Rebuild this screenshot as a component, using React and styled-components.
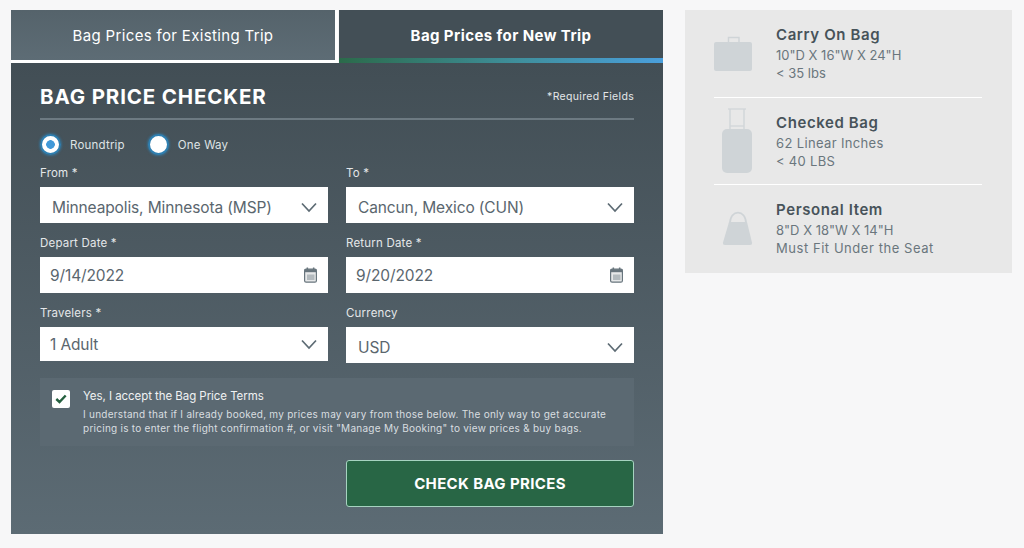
import React from 'react';
import styled, { createGlobalStyle } from 'styled-components';

const GlobalStyle = createGlobalStyle`
    * {
        box-sizing: border-box;
    }

    body {
        margin: 0;
        background: #f7f7f8;
        font-family: "Inter", "Noto Sans", sans-serif;
    }
`;

const Chevron = () => (
    <svg width="16" height="11" viewBox="0 0 16 11" fill="none">
        <path d="M1 1.5 L8 9 L15 1.5" stroke="#5d6b74" strokeWidth="1.7" />
    </svg>
);

const CalendarIcon = () => (
    <svg width="13" height="16" viewBox="0 0 13 16">
        <rect x="0.6" y="2.2" width="11.8" height="13" rx="1.5" fill="#e6e8e9" stroke="#68757d" strokeWidth="1.2" />
        <rect x="0.6" y="2.2" width="11.8" height="3" fill="#68757d" />
        <rect x="2.6" y="0.5" width="1.5" height="3" fill="#68757d" />
        <rect x="8.9" y="0.5" width="1.5" height="3" fill="#68757d" />
        <rect x="3" y="7.5" width="7.5" height="5.5" fill="#b3babe" />
    </svg>
);

const CarryOnIcon = () => (
    <svg width="40" height="36" viewBox="0 0 40 36">
        <path d="M14.5 7 V1.5 H25 V7" fill="none" stroke="#cfd4d7" strokeWidth="1.4" />
        <rect x="0" y="6" width="38" height="29" rx="2" fill="#cfd4d7" />
    </svg>
);

const CheckedIcon = () => (
    <svg width="40" height="66" viewBox="0 0 40 66">
        <path d="M14 1 H32 M16 1 V21 M30 1 V21 M16 18 H30" fill="none" stroke="#d3d7da" strokeWidth="1.6" />
        <rect x="8" y="21" width="30" height="44" rx="5" fill="#cfd4d7" />
    </svg>
);

const PersonalIcon = () => (
    <svg width="40" height="38" viewBox="0 0 40 38">
        <path d="M15.8 14 C16.2 6 20 2.6 24 2.6 C28 2.6 31.8 6 32.2 14" fill="none" stroke="#cfd4d7" strokeWidth="1.8" />
        <path d="M15 12 H33 L38 32.5 Q38.4 35 36 35 H11 Q8.6 35 9 32.5 Z" fill="#cfd4d7" />
    </svg>
);

const CheckIcon = () => (
    <svg width="12" height="10" viewBox="0 0 12 10" fill="none">
        <path d="M1.3 5 L4.5 8 L10.7 1.5" stroke="#24603f" strokeWidth="2.4" />
    </svg>
);

const bags = [
    {
        title: 'Carry On Bag',
        Icon: CarryOnIcon,
        lines: [{ text: '10"D X 16"W X 24"H', tracking: 0 }, { text: '< 35 lbs', tracking: 0 }],
    },
    {
        title: 'Checked Bag',
        Icon: CheckedIcon,
        lines: [{ text: '62 Linear Inches', tracking: 0.35 }, { text: '< 40 LBS', tracking: 0.3 }],
    },
    {
        title: 'Personal Item',
        Icon: PersonalIcon,
        lines: [{ text: '8"D X 18"W X 14"H', tracking: 0 }, { text: 'Must Fit Under the Seat', tracking: 0.55 }],
    },
];

const App = () => {
    return (
        <Page>
            <GlobalStyle />
            <Main>
                <Tabs>
                    <Tab>Bag Prices for Existing Trip</Tab>
                    <Tab $active>Bag Prices for New Trip</Tab>
                </Tabs>
                <Panel>
                    <Header>
                        <Title>BAG PRICE CHECKER</Title>
                        <Required>*Required Fields</Required>
                    </Header>
                    <RadioRow>
                        <RadioOption>
                            <Radio $checked />
                            Roundtrip
                        </RadioOption>
                        <RadioOption>
                            <Radio />
                            One Way
                        </RadioOption>
                    </RadioRow>
                    <FieldGrid>
                        <Field>
                            <Label>From *</Label>
                            <Control $select>
                                <span>Minneapolis, Minnesota (MSP)</span>
                                <Chevron />
                            </Control>
                        </Field>
                        <Field>
                            <Label>To *</Label>
                            <Control $select>
                                <span>Cancun, Mexico (CUN)</span>
                                <Chevron />
                            </Control>
                        </Field>
                        <Field>
                            <Label>Depart Date *</Label>
                            <Control>
                                <span>9/14/2022</span>
                                <CalendarIcon />
                            </Control>
                        </Field>
                        <Field>
                            <Label>Return Date *</Label>
                            <Control>
                                <span>9/20/2022</span>
                                <CalendarIcon />
                            </Control>
                        </Field>
                        <Field>
                            <Label>Travelers *</Label>
                            <Control $height={34}>
                                <span>1 Adult</span>
                                <Chevron />
                            </Control>
                        </Field>
                        <Field>
                            <Label>Currency</Label>
                            <Control $select>
                                <span>USD</span>
                                <Chevron />
                            </Control>
                        </Field>
                    </FieldGrid>
                    <Terms>
                        <Checkbox>
                            <CheckIcon />
                        </Checkbox>
                        <div>
                            <TermsTitle>Yes, I accept the Bag Price Terms</TermsTitle>
                            <TermsText>
                                I understand that if I already booked, my prices may vary from those below. The only way to get accurate
                                <br />
                                pricing is to enter the flight confirmation #, or visit "Manage My Booking" to view prices &amp; buy bags.
                            </TermsText>
                        </div>
                    </Terms>
                    <Actions>
                        <SubmitButton>CHECK BAG PRICES</SubmitButton>
                    </Actions>
                </Panel>
            </Main>
            <Aside>
                {bags.map(({ title, lines, Icon }) => (
                    <BagRow key={title}>
                        <BagIcon>
                            <Icon />
                        </BagIcon>
                        <div>
                            <BagTitle>{title}</BagTitle>
                            {lines.map((line) => (
                                <BagLine key={line.text} $tracking={line.tracking}>
                                    {line.text}
                                </BagLine>
                            ))}
                        </div>
                    </BagRow>
                ))}
            </Aside>
        </Page>
    );
};

const Page = styled.div`
    display: flex;
    align-items: flex-start;
    gap: 22px;
    padding: 10px 0 14px 11px;
`;

const Main = styled.div`
    width: 652px;
`;

const Tabs = styled.div`
    display: flex;
    gap: 1px;
`;

const Tab = styled.div`
    height: 53px;
    display: flex;
    align-items: center;
    justify-content: center;
    padding-bottom: ${(p) => (p.$active ? '2px' : '0')};
    color: #fff;
    font-size: 15px;
    letter-spacing: ${(p) => (p.$active ? '0.42px' : '0.34px')};
    font-weight: ${(p) => (p.$active ? 700 : 400)};
    width: ${(p) => (p.$active ? '324px' : '327px')};
    background: ${(p) => (p.$active
        ? 'linear-gradient(90deg, #2b6a4a, #3f8f9c 55%, #4a9fdc) bottom / 100% 5px no-repeat, #434f56'
        : 'linear-gradient(180deg, #55636b, #5d6c75)')};
    border-right: ${(p) => (p.$active ? 'none' : '3px solid #fff')};
    border-bottom: ${(p) => (p.$active ? 'none' : '3px solid #fff')};
`;

const Panel = styled.div`
    height: 471px;
    padding: 20px 29px 27px 29px;
    background: linear-gradient(180deg, #424e55 0%, #5c6b74 100%);
`;

const Header = styled.div`
    display: flex;
    align-items: center;
    justify-content: space-between;
    height: 37px;
    padding-bottom: 8px;
    border-bottom: 2px solid #6d7a82;
`;

const Title = styled.h1`
    margin: 0;
    color: #fff;
    font-size: 20.5px;
    font-weight: 700;
    letter-spacing: 0.86px;
`;

const Required = styled.span`
    color: #e4e7e9;
    font-size: 10.5px;
    letter-spacing: 0.32px;
`;

const RadioRow = styled.div`
    display: flex;
    gap: 23px;
    margin: 14px 0 11px 0;
`;

const RadioOption = styled.div`
    display: flex;
    align-items: center;
    gap: 9px;
    color: #dfe3e5;
    font-size: 11.5px;
    letter-spacing: 0.2px;
`;

const Radio = styled.span`
    width: 21px;
    height: 21px;
    border-radius: 50%;
    border: 2px solid #2f7fb0;
    box-shadow: 0 0 2px 1px rgba(47, 127, 176, 0.55);
    background: ${(p) => (p.$checked ? 'radial-gradient(circle, #4199d8 0 4px, #fff 4.6px)' : '#fff')};
`;

const FieldGrid = styled.div`
    display: grid;
    grid-template-columns: 288px 288px;
    column-gap: 18px;
    row-gap: 13px;
    align-items: start;
`;

const Field = styled.div`
    display: flex;
    flex-direction: column;
    gap: 7px;
`;

const Label = styled.label`
    color: #e4e7e9;
    font-size: 11.5px;
    line-height: 14px;
    letter-spacing: 0.2px;
`;

const Control = styled.div`
    display: flex;
    align-items: center;
    justify-content: space-between;
    height: ${(p) => p.$height || 36}px;
    padding: ${(p) => (p.$select ? 4 : 0)}px 11px 0 ${(p) => (p.$select ? 12 : 10)}px;
    background: #fff;
    color: #5a666e;
    font-size: 15.5px;
    letter-spacing: -0.12px;
`;

const Terms = styled.div`
    display: flex;
    gap: 13px;
    height: 68px;
    margin-top: 15px;
    padding: 12px;
    background: #5b6972;
`;

const Checkbox = styled.span`
    flex: none;
    display: flex;
    align-items: center;
    justify-content: center;
    width: 18px;
    height: 18px;
    border-radius: 2px;
    background: #fff;
`;

const TermsTitle = styled.div`
    color: #f0f2f3;
    font-size: 11.5px;
    line-height: 13px;
    letter-spacing: -0.06px;
    margin-bottom: 4px;
`;

const TermsText = styled.div`
    color: #d9dee0;
    font-size: 10px;
    line-height: 14px;
    letter-spacing: 0.26px;
    white-space: nowrap;
`;

const Actions = styled.div`
    display: flex;
    justify-content: flex-end;
    margin-top: 14px;
`;

const SubmitButton = styled.button`
    width: 288px;
    height: 47px;
    padding: 0;
    border: 1px solid #a6d3c0;
    border-radius: 3px;
    background: #286645;
    color: #fff;
    font-family: inherit;
    font-size: 15px;
    font-weight: 700;
    letter-spacing: 0.36px;
`;

const Aside = styled.aside`
    width: 327px;
    padding: 0 30px 0 29px;
    background: #e8e8e8;
`;

const BagRow = styled.div`
    display: flex;
    height: 87px;
    border-bottom: 1px solid #fff;

    &:first-child {
        height: 88px;
    }

    &:last-child {
        height: 88px;
        border-bottom: none;
    }
`;

const BagIcon = styled.div`
    flex: none;
    display: flex;
    align-items: center;
    width: 62px;
`;

const BagTitle = styled.div`
    margin-top: 15px;
    margin-bottom: 1px;
    color: #47535a;
    font-size: 15px;
    font-weight: 600;
    line-height: 20px;
    letter-spacing: 0.6px;
`;

const BagLine = styled.div`
    color: #6a767d;
    font-size: 13px;
    line-height: 18px;
    letter-spacing: ${(p) => p.$tracking}px;
`;

export default App;
